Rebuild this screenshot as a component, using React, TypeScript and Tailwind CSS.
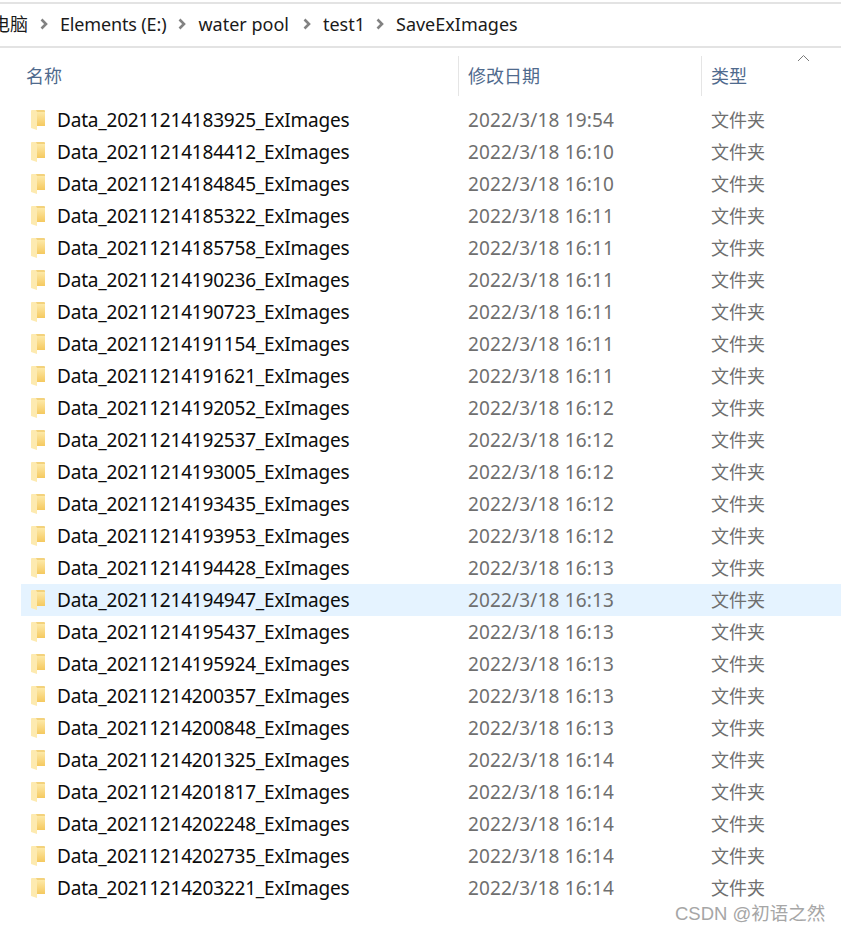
const font = { fontFamily: '"Noto Sans", "Noto Sans CJK SC", sans-serif' };

const rows: [string, string][] = [
  ["20211214183925", "19:54"],
  ["20211214184412", "16:10"],
  ["20211214184845", "16:10"],
  ["20211214185322", "16:11"],
  ["20211214185758", "16:11"],
  ["20211214190236", "16:11"],
  ["20211214190723", "16:11"],
  ["20211214191154", "16:11"],
  ["20211214191621", "16:11"],
  ["20211214192052", "16:12"],
  ["20211214192537", "16:12"],
  ["20211214193005", "16:12"],
  ["20211214193435", "16:12"],
  ["20211214193953", "16:12"],
  ["20211214194428", "16:13"],
  ["20211214194947", "16:13"],
  ["20211214195437", "16:13"],
  ["20211214195924", "16:13"],
  ["20211214200357", "16:13"],
  ["20211214200848", "16:13"],
  ["20211214201325", "16:14"],
  ["20211214201817", "16:14"],
  ["20211214202248", "16:14"],
  ["20211214202735", "16:14"],
  ["20211214203221", "16:14"],
];

const FolderIcon = ({ id }: { id: number }) => (
  <svg width="16" height="22" viewBox="0 0 16 22" className="shrink-0">
    <defs>
      <linearGradient id={`f${id}`} x1="0" y1="0" x2="0" y2="1">
        <stop offset="0" stopColor="#fde9a8" />
        <stop offset="1" stopColor="#f5c95f" />
      </linearGradient>
    </defs>
    <path d="M6 1 H14 Q15 1 15 2 V17 H6 Z" fill="#f3d27c" />
    <path d="M7 3 H15 V17 H7 Z" fill={`url(#f${id})`} />
    <path d="M1 2 Q1 1 2 1 H6 L7 3 V21 L1 19 Z" fill="#fdeab0" />
  </svg>
);

const Chevron = () => (
  <svg width="8" height="12" viewBox="0 0 8 12" className="shrink-0">
    <path d="M1.5 1.5 L6 6 L1.5 10.5" fill="none" stroke="#828282" strokeWidth="2.6" />
  </svg>
);

const App = () => {
  return (
    <div className="relative h-[933px] w-[841px] overflow-hidden bg-white" style={font}>
      <div className="mt-[2px] flex h-[46px] items-center gap-[12px] border-y-2 border-[#e3e3e3] pb-[2px] text-[18px] text-[#1a1a1a]">
        <span className="w-[28px] shrink-0 overflow-hidden whitespace-nowrap text-right">
          <span className="-ml-[8px] inline-block">电脑</span>
        </span>
        <Chevron />
        <span className="tracking-[-0.15px]">Elements (E:)</span>
        <Chevron />
        <span className="mr-[2px]">water pool</span>
        <Chevron />
        <span className="-mr-[1px]">test1</span>
        <Chevron />
        <span>SaveExImages</span>
      </div>

      <div className="flex h-[56px] items-center text-[18px] text-[#4f6a8d]">
        <div className="w-[458px] pl-[26px]">名称</div>
        <div className="flex h-[40px] w-[243px] items-center border-l border-[#e5e5e5] pl-[9px]">修改日期</div>
        <div className="flex h-[40px] items-center border-l border-[#e5e5e5] pl-[9px]">类型</div>
      </div>

      <div className="absolute left-[797px] top-[54px]">
        <svg width="13" height="8" viewBox="0 0 13 8">
          <path d="M1 7 L6.5 1.5 L12 7" fill="none" stroke="#7a7a7a" strokeWidth="1" />
        </svg>
      </div>

      <div className="ml-[21px]">
        {rows.map(([stamp, time], i) => (
          <div key={stamp} className={`flex h-[32px] items-center text-[19px] ${i === 15 ? "bg-[#e5f3ff]" : ""}`}>
            <div className="flex w-[447px] items-center gap-[11px] pl-[9px]">
              <FolderIcon id={i} />
              <span className="tracking-[-0.2px] text-[#0c0c0c]">{`Data_${stamp}_ExImages`}</span>
            </div>
            <div className="w-[243px] tracking-[0.15px] text-[#6f6f6f]">{`2022/3/18 ${time}`}</div>
            <div className="text-[18px] text-[#6f6f6f]">文件夹</div>
          </div>
        ))}
      </div>

      <div
        className="absolute left-[675px] top-[901px] text-[18.5px] leading-[26px] text-[#a6a6a6]"
        style={{ fontFamily: '"Liberation Sans", "Noto Sans CJK SC", sans-serif' }}
      >
        CSDN @初语之然
      </div>
    </div>
  );
};

export default App;
